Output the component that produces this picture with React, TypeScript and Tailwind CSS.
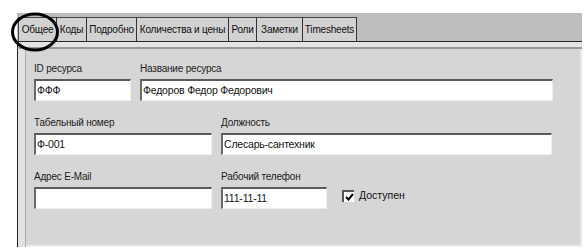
import React from "react";

const tabs = [
    { label: "Общее", w: 39 },
    { label: "Коды", w: 30 },
    { label: "Подробно", w: 50 },
    { label: "Количества и цены", w: 92 },
    { label: "Роли", w: 28 },
    { label: "Заметки", w: 46 },
    { label: "Timesheets", w: 54 },
];

function Field({ label, value, w }: { label: string; value?: string; w: string }) {
    return (
        <div className="flex flex-col">
            <span className="text-[10px] leading-[13px] text-[#222] -tracking-[0.2px]">{label}</span>
            <div
                className={`${w} h-[22px] mt-[4px] bg-white border-t-2 border-l-2 border-t-[#5a5a5a] border-l-[#6a6a6a] border-b border-r border-b-[#eeeeee] border-r-[#eeeeee] flex items-center px-[1px] text-[10.5px] text-[#111] -tracking-[0.2px]`}
            >
                {value}
            </div>
        </div>
    );
}

export default function App() {
    return (
        <div
            className="w-[586px] h-[250px] bg-white relative overflow-hidden"
            style={{ fontFamily: '"Liberation Sans", Arial, sans-serif' }}
        >
            <div className="pt-[13px] pl-[17px] w-[582px] h-[247px] flex flex-col">
                {/* tab strip */}
                <div className="h-[29px] bg-[#bdbdbd] flex items-end pl-[1px] border-b border-b-[#2a2a2a]">
                    {tabs.map((t) => (
                        <div
                            key={t.label}
                            style={{ width: t.w }}
                            className="h-[24px] border-r border-r-[#333] border-t border-t-[#444] first:border-l first:border-l-[#444] bg-[#d2d2d2] flex items-center justify-center text-[10px] text-[#111] -tracking-[0.2px] whitespace-nowrap"
                        >
                            {t.label}
                        </div>
                    ))}
                </div>
                <div className="h-[7px] bg-[#e4e4e4] border-l border-l-[#222] border-b-2 border-b-[#9a9a9a]" />
                {/* panel */}
                <div className="flex-1 border-l border-l-[#222] flex">
                    <div className="w-[8px] bg-[#e2e2e2] border-r border-r-[#b0b0b0]" />
                    <div className="flex-1 bg-[#d6d6d6] border-r-2 border-r-[#e8e8e8] border-b-2 border-b-[#eeeeee] pl-[8px] pt-[13px] flex flex-col gap-[15px]">
                        <div className="flex gap-[9px]">
                            <Field label="ID ресурса" value="ФФФ" w="w-[97px]" />
                            <Field label="Название ресурса" value="Федоров Федор Федорович" w="w-[413px]" />
                        </div>
                        <div className="flex gap-[9px]">
                            <Field label="Табельный номер" value="Ф-001" w="w-[178px]" />
                            <Field label="Должность" value="Слесарь-сантехник" w="w-[331px]" />
                        </div>
                        <div className="flex gap-[9px]">
                            <Field label="Адрес E-Mail" w="w-[178px]" />
                            <Field label="Рабочий телефон" value="111-11-11" w="w-[106px]" />
                            <div className="flex items-center ml-[6px] mt-[15px] gap-[5px] h-[22px]">
                                <div className="w-[12px] h-[12px] bg-white border-t-2 border-l-2 border-t-[#555] border-l-[#555] flex items-center justify-center">
                                    <svg width="9" height="8" viewBox="0 0 9 8">
                                        <path d="M1 4 L3.5 6.5 L8 1" stroke="#000" strokeWidth="2" fill="none" />
                                    </svg>
                                </div>
                                <span className="text-[10.5px] text-[#111]">Доступен</span>
                            </div>
                        </div>
                    </div>
                </div>
            </div>
            {/* hand-drawn circle over the first tab */}
            <svg className="absolute left-[10px] top-[11px]" width="52" height="42" viewBox="0 0 52 42">
                <ellipse cx="25" cy="21" rx="22.5" ry="18" stroke="#000" strokeWidth="3" fill="none" />
            </svg>
        </div>
    );
}
